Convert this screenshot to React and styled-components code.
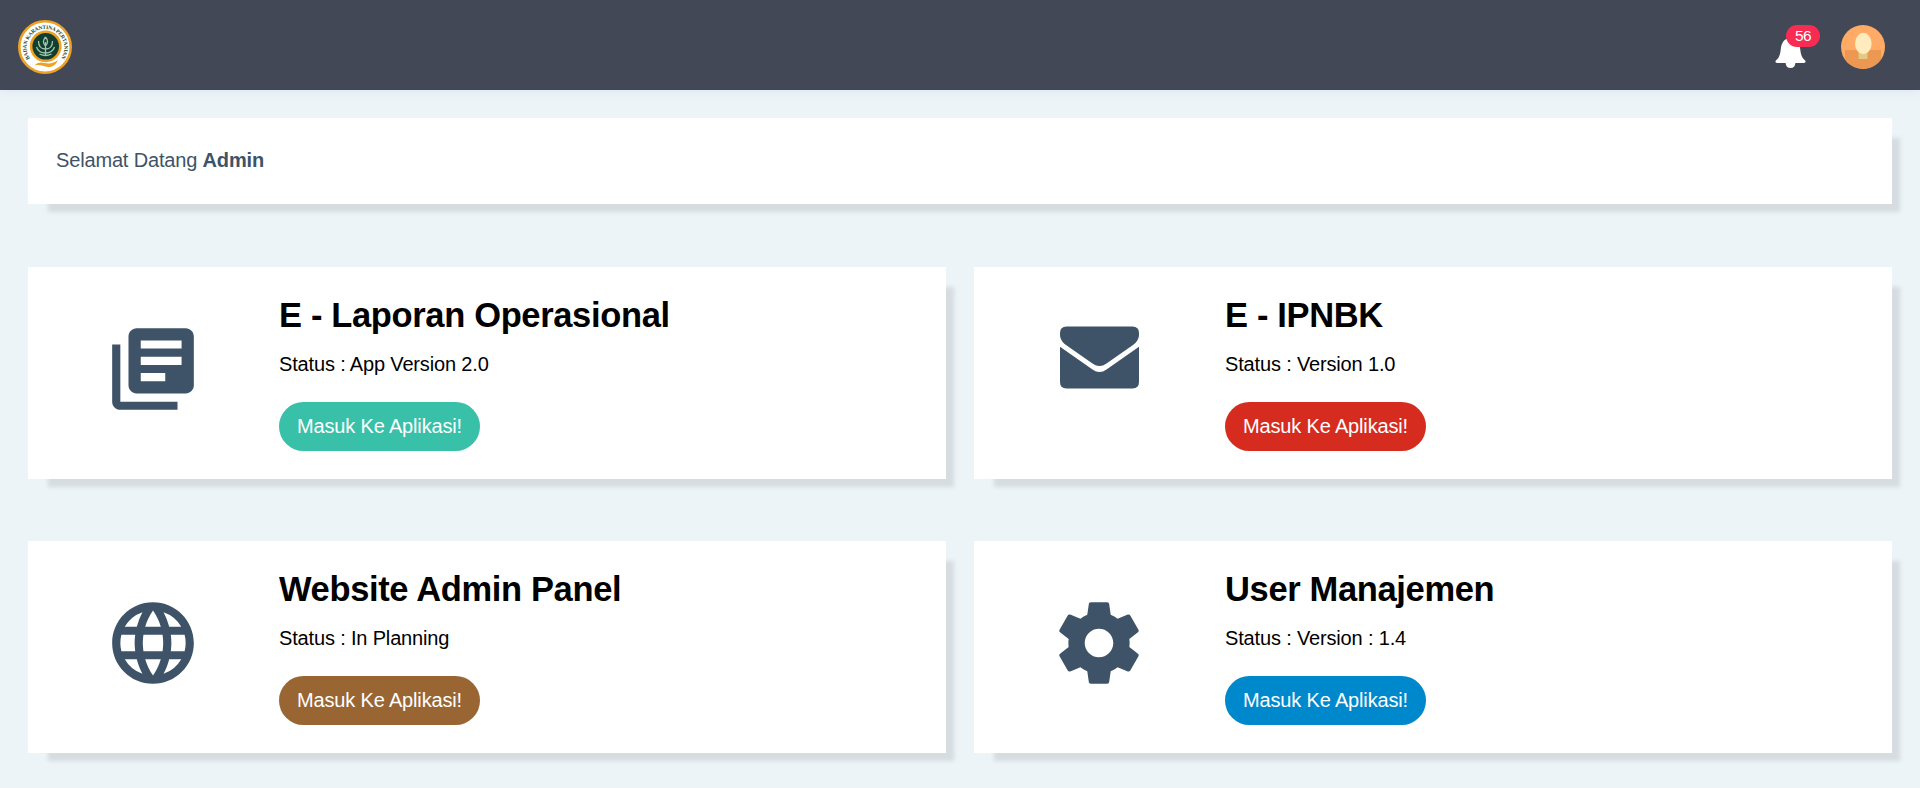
import React from "react";
import styled, { createGlobalStyle } from "styled-components";
import { MdLibraryBooks, MdLanguage } from "react-icons/md";

const GlobalStyle = createGlobalStyle`
  * { box-sizing: border-box; }
  body {
    margin: 0;
    min-height: 100vh;
    background: #ecf4f8;
    color: #000;
    font: 20px/1.2 "Liberation Sans", Arial, sans-serif;
    letter-spacing: -0.16px;
  }
`;

const Header = styled.header`
  display: flex;
  align-items: center;
  justify-content: space-between;
  height: 90px;
  padding: 3px 35px 0 18px;
  background: #434856;
  box-shadow: 0 2px 8px rgba(200, 212, 235, 0.35);
`;

const Logo = styled.svg`
  width: 54px;
  height: 54px;
`;

const Actions = styled.div`
  display: flex;
  align-items: center;
  gap: 34px;
`;

const Notifications = styled.div`
  position: relative;
  width: 32px;
  height: 44px;
`;

const BellIcon = styled.svg`
  display: block;
  width: 32px;
  height: 44px;
`;

const Badge = styled.span`
  position: absolute;
  left: 11px;
  top: 0;
  width: 34px;
  height: 22px;
  border-radius: 11px;
  background: #f82c52;
  color: #fff;
  font-size: 15.5px;
  line-height: 22px;
  letter-spacing: -0.5px;
  text-align: center;
`;

const Avatar = styled.svg`
  width: 44px;
  height: 44px;
`;

const Main = styled.main`
  display: flex;
  flex-direction: column;
  gap: 63px;
  padding: 28px;
`;

const Panel = styled.section`
  background: #fff;
  box-shadow: 14px 14px 4px -6px #d6dce0;
`;

const Welcome = styled(Panel)`
  display: flex;
  align-items: center;
  height: 86px;
  padding: 0 28px 2px;
  color: #3e5367;
  white-space: pre;
`;

const Grid = styled.div`
  display: grid;
  grid-template-columns: 1fr 1fr;
  gap: 62px 28px;
`;

const AppCard = styled(Panel)`
  display: flex;
  height: 212px;
`;

const IconColumn = styled.div`
  display: flex;
  justify-content: center;
  width: 251px;
  padding: 53px 2px 0 0;
  color: #3e5367;

  svg {
    display: block;
    width: 98px;
    height: 98px;
  }
`;

const Details = styled.div`
  display: flex;
  flex-direction: column;
  align-items: flex-start;
  padding-top: 28px;
`;

const Title = styled.h2`
  margin: 0;
  font-size: 34.5px;
  line-height: 40px;
  letter-spacing: -0.35px;
`;

const Status = styled.p`
  margin: 17px 0 26px;
  line-height: 24px;
`;

const EnterButton = styled.button`
  width: 201px;
  height: 49px;
  padding: 0 0 2px;
  border: 0;
  border-radius: 25px;
  background: ${(p) => p.$color};
  color: #fff;
  font: inherit;
  letter-spacing: -0.16px;
`;

function EnvelopeIcon() {
  return (
    <svg viewBox="0 0 98 98" fill="currentColor">
      <path d="M16.500 6.500h66q6.500 0 6.500 6.500v2c0 3.500-2.500 7.500-6 10L56.500 43.500q-7 5-14 0L16 25c-3.500-2.500-6-6.500-6-10v-2q0-6.500 6.500-6.500z" />
      <path d="M10 26.700L42.500 49.500q7 5 14 0L89 26.700V62q0 6.400-6.400 6.400H16.400Q10 68.400 10 62z" />
    </svg>
  );
}

function GearIcon() {
  return (
    <svg viewBox="0 0 24 24" fill="currentColor">
      <path d="M19.43 12.98c.04-.32.07-.64.07-.98s-.03-.66-.07-.98l2.110-1.650c.19-.15.24-.42.12-.64l-2-3.460c-.12-.22-.39-.3-.61-.22l-2.490 1c-.52-.4-1.080-.73-1.690-.98l-.38-2.650C14.460 2.180 14.250 2 14 2h-4c-.25 0-.46.18-.49.42l-.38 2.650c-.61.25-1.170.59-1.690.98l-2.490-1c-.23-.09-.49 0-.61.22l-2 3.460c-.13.22-.07.49.12.64l2.110 1.650c-.04.32-.07.65-.07.98s.03.66.07.98l-2.110 1.650c-.19.15-.24.42-.12.64l2 3.460c.12.22.39.3.61.22l2.490-1c.52.4 1.080.73 1.690.98l.38 2.650c.03.24.24.42.49.42h4c.25 0 .46-.18.49-.42l.38-2.650c.61-.25 1.170-.59 1.690-.98l2.490 1c.23.09.49 0 .61-.22l2-3.460c.12-.22.07-.49-.12-.64l-2.110-1.650zM12 15.500c-1.930 0-3.500-1.570-3.500-3.500s1.570-3.500 3.500-3.500 3.500 1.570 3.500 3.500-1.570 3.500-3.500 3.500z" />
    </svg>
  );
}

const apps = [
  { title: "E - Laporan Operasional", status: "Status : App Version 2.0", color: "#38c0a8", Icon: MdLibraryBooks },
  { title: "E - IPNBK", status: "Status : Version 1.0", color: "#d62c20", Icon: EnvelopeIcon },
  { title: "Website Admin Panel", status: "Status : In Planning", color: "#996633", Icon: MdLanguage },
  { title: "User Manajemen", status: "Status : Version : 1.4", color: "#0088cc", Icon: GearIcon },
];

function OrganisationLogo() {
  return (
    <Logo viewBox="0 0 54 54">
      <circle cx="27" cy="27" r="25.700" fill="#fff" stroke="#eda126" strokeWidth="2.600" />
      <defs>
        <path id="logo-ring" d="M12.100 38.500A18.800 18.800 0 1 1 42.900 38.500" />
      </defs>
      <text fill="#174a36" fontFamily="Liberation Serif, serif" fontSize="5.400" fontWeight="bold" letterSpacing="0">
        <textPath href="#logo-ring" textLength="81">BADAN KARANTINA PERTANIAN</textPath>
      </text>
      <circle cx="27.700" cy="26.300" r="14.600" fill="#123f2d" stroke="#eda126" strokeWidth="2.600" />
      <g fill="none" stroke="#9fc4b4" strokeWidth="1.300">
        <path d="M27.500 17q-4 5 0 9q4-4 0-9M27.500 22v14M20.500 21q0 8 7 8q7 0 7-8M18.500 27q2 6 9 6t9-6M21.500 34q6 3 12 0" />
      </g>
      <path d="M16.500 45.500c5-5 9-2 14-2 4 0 6-1.500 9.500-3.500-2 5-6 7.500-10 7-5-.5-8-3-13.500-1.500z" fill="#eda126" />
    </Logo>
  );
}

export default function App() {
  return (
    <>
      <GlobalStyle />
      <Header>
        <OrganisationLogo />
        <Actions>
          <Notifications>
            <BellIcon viewBox="0 0 32 44" fill="#fff">
              <path d="M15.500 13C9 13 6.500 18 5.800 24c-.6 6-1.800 9-5 11.500Q-.3 38 2 38h27q2.300 0 1.200-2.500c-3.200-2.500-4.400-5.500-5-11.500-.7-6-3.200-11-9.700-11z" />
              <path d="M10.500 37.500h10q-.5 5.500-5 5.500t-5-5.500z" />
            </BellIcon>
            <Badge>56</Badge>
          </Notifications>
          <Avatar viewBox="0 0 44 44">
            <circle cx="22" cy="22" r="22" fill="#ffab66" />
            <path d="M4 25h36v9.500A22 22 0 0 1 4 34.500z" fill="#ed9852" />
            <path d="M17.500 25h9v9h-9z" fill="#e2ca84" />
            <ellipse cx="22.300" cy="18.500" rx="8.300" ry="10.700" fill="#ffebbd" />
          </Avatar>
        </Actions>
      </Header>
      <Main>
        <Welcome>
          Selamat Datang <strong>Admin</strong>
        </Welcome>
        <Grid>
          {apps.map(({ title, status, color, Icon }) => (
            <AppCard key={title}>
              <IconColumn>
                <Icon />
              </IconColumn>
              <Details>
                <Title>{title}</Title>
                <Status>{status}</Status>
                <EnterButton $color={color}>Masuk Ke Aplikasi!</EnterButton>
              </Details>
            </AppCard>
          ))}
        </Grid>
      </Main>
    </>
  );
}
